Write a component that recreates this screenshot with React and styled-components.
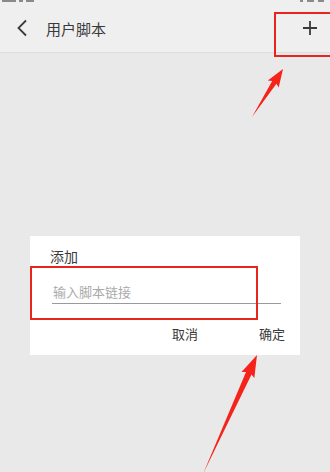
import React from "react";
import styled, { createGlobalStyle } from "styled-components";

const GlobalStyle = createGlobalStyle`
    html, body {
        margin: 0;
        padding: 0;
        background: #e9e9e9;
    }
    body {
        font-family: "Noto Sans CJK SC", "Noto Sans", sans-serif;
    }
`;

// arrow polygon from a pointed tail to the tip
const arrowPoints = (tail, tip, headLen, headWidth, shaftWidth) => {
    const dx = tip[0] - tail[0];
    const dy = tip[1] - tail[1];
    const len = Math.sqrt(dx * dx + dy * dy);
    const ux = dx / len;
    const uy = dy / len;
    const px = -uy;
    const py = ux;
    const bx = tip[0] - ux * headLen;
    const by = tip[1] - uy * headLen;
    const pts = [
        [tail[0], tail[1]],
        [bx + px * shaftWidth / 2, by + py * shaftWidth / 2],
        [bx + px * headWidth / 2 - ux * 2, by + py * headWidth / 2 - uy * 2],
        [tip[0], tip[1]],
        [bx - px * headWidth / 2 - ux * 2, by - py * headWidth / 2 - uy * 2],
        [bx - px * shaftWidth / 2, by - py * shaftWidth / 2],
    ];
    return pts.map((p) => p[0].toFixed(1) + "," + p[1].toFixed(1)).join(" ");
};

const App = () => {
    return (
        <Screen>
            <GlobalStyle />
            <StatusBar>
                <StatusLeft>
                    <Blip w={14} />
                    <Blip w={4} />
                    <Blip w={8} />
                </StatusLeft>
                <StatusRight>
                    <Blip w={3} />
                    <Blip w={7} />
                    <Blip w={6} />
                </StatusRight>
            </StatusBar>
            <Header>
                <BackButton>
                    <svg width="12" height="18" viewBox="0 0 12 18">
                        <path d="M10 1.5 L2.5 9 L10 16.5" fill="none" stroke="#3a3a3a" strokeWidth="1.8" />
                    </svg>
                </BackButton>
                <Title>用户脚本</Title>
                <AddButton>
                    <svg width="16" height="16" viewBox="0 0 16 16">
                        <path d="M8 1 V15 M1 8 H15" stroke="#3a3a3a" strokeWidth="1.8" />
                    </svg>
                </AddButton>
            </Header>
            <Body>
                <Dialog>
                    <DialogTitle>添加</DialogTitle>
                    <UrlInput placeholder="输入脚本链接" />
                    <Actions>
                        <ActionButton>取消</ActionButton>
                        <ActionButton>确定</ActionButton>
                    </Actions>
                </Dialog>
            </Body>

            <Mark left={274} top={12} width={60} height={45} />
            <Mark left={30} top={266} width={228} height={54} />
            <Arrows width="330" height="472" viewBox="0 0 330 472">
                <polygon points={arrowPoints([252, 117], [283, 69], 16, 13, 5)} fill="#f5231a" />
                <polygon points={arrowPoints([203, 474], [257, 355], 20, 14, 6)} fill="#f5231a" />
            </Arrows>
        </Screen>
    );
};

const Screen = styled.div`
    position: relative;
    width: 330px;
    height: 472px;
    overflow: hidden;
    background: #e9e9e9;
    display: flex;
    flex-direction: column;
`;

const StatusBar = styled.div`
    height: 4px;
    background: #efefef;
    display: flex;
    justify-content: space-between;
    padding: 0 6px 0 2px;
`;

const StatusLeft = styled.div`
    display: flex;
    gap: 3px;
`;

const StatusRight = styled.div`
    display: flex;
    gap: 4px;
`;

const Blip = styled.div`
    width: ${(p) => p.w}px;
    height: 2px;
    background: #8a8a8a;
`;

const Header = styled.div`
    height: 48px;
    background: #efefef;
    border-bottom: 1px solid #dcdcdc;
    display: flex;
    align-items: center;
    padding: 0 0 0 16px;
`;

const BackButton = styled.div`
    width: 14px;
    display: flex;
    align-items: center;
`;

const Title = styled.div`
    margin-left: 16px;
    font-size: 15px;
    color: #3a3a3a;
    flex: 1;
`;

const AddButton = styled.div`
    width: 16px;
    display: flex;
    margin-right: 12px;
`;

const Body = styled.div`
    flex: 1;
    padding-top: 183px;
`;

const Dialog = styled.div`
    width: 270px;
    margin-left: 30px;
    background: #ffffff;
    padding: 10px 19px 0 20px;
    box-sizing: border-box;
    height: 119px;
    display: flex;
    flex-direction: column;
`;

const DialogTitle = styled.div`
    font-size: 14px;
    line-height: 20px;
    color: #3a3a3a;
`;

const UrlInput = styled.input`
    margin: 6px 0 0 2px;
    height: 32px;
    border: none;
    border-bottom: 1px solid #9a9a9a;
    padding: 8px 0 0 1px;
    box-sizing: border-box;
    font-family: inherit;
    font-size: 13px;
    color: #333;
    background: transparent;
    outline: none;
    &::placeholder {
        color: #aaaaaa;
    }
`;

const Actions = styled.div`
    display: flex;
    justify-content: flex-end;
    gap: 61px;
    margin-top: 21px;
    margin-right: -4px;
`;

const ActionButton = styled.div`
    font-size: 13px;
    line-height: 18px;
    color: #3a3a3a;
`;

const Mark = styled.div`
    position: absolute;
    left: ${(p) => p.left}px;
    top: ${(p) => p.top}px;
    width: ${(p) => p.width}px;
    height: ${(p) => p.height}px;
    border: 2px solid #e8251d;
    box-sizing: border-box;
    pointer-events: none;
`;

const Arrows = styled.svg`
    position: absolute;
    left: 0;
    top: 0;
    pointer-events: none;
`;

export default App;
